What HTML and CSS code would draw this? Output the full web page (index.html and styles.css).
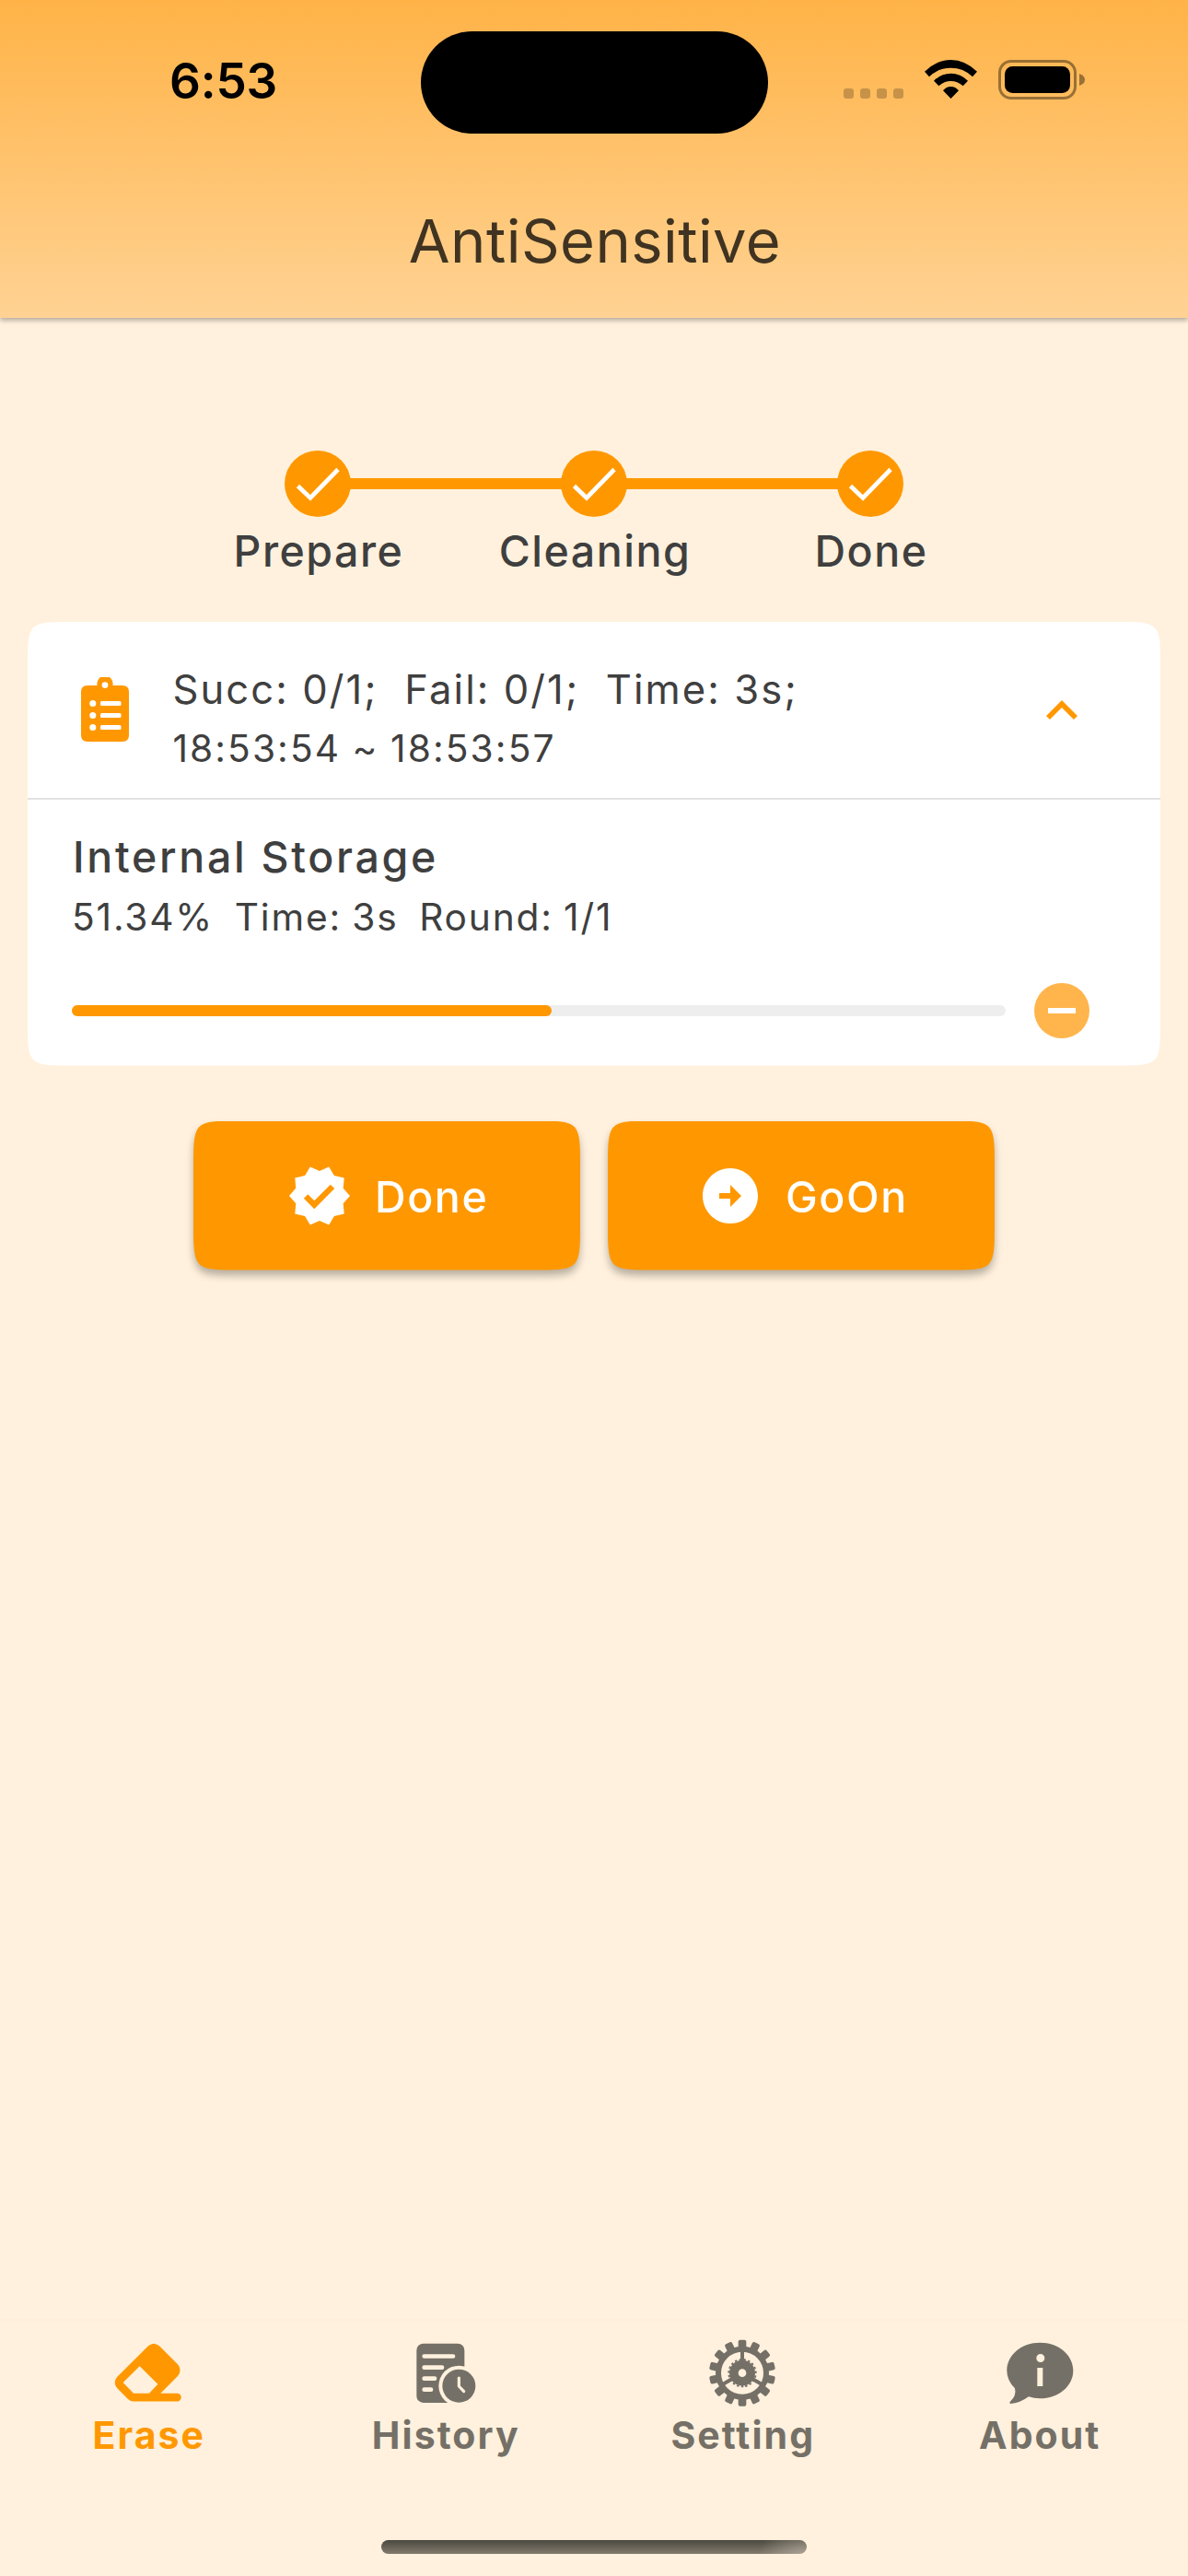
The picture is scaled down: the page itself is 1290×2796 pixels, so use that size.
FILE: index.html
```html
<!DOCTYPE html>
<html lang="en">
<head>
<meta charset="utf-8">
<title>AntiSensitive</title>
<link rel="stylesheet" href="styles.css">
</head>
<body>
<header class="header">
  <div class="status">
    <div class="status-time">6:53</div>
    <div class="island"></div>
    <svg class="status-icons" viewBox="0 0 290 70">
      <g fill="#000" fill-opacity=".22">
        <rect x="16" y="46" width="11" height="11" rx="3"/>
        <rect x="34" y="46" width="11" height="11" rx="3"/>
        <rect x="52" y="46" width="11" height="11" rx="3"/>
        <rect x="70" y="46" width="11" height="11" rx="3"/>
      </g>
      <path d="M104 27.8Q117 15 132.5 15T161 27.8L156 33.2Q146 23.8 132.5 23.8T109 33.2Z"/>
      <path d="M114 37.7Q122 29.8 132.5 29.8T151 37.7L145.700 43.200Q139.500 37.900 132.500 37.900T119.300 43.200Z"/>
      <path d="M124 48.200Q127.500 43.900 132.500 43.900T141 48.200L132.500 57Z"/>
      <rect x="185.500" y="16.500" width="82" height="40" rx="12.500" fill="none" stroke="#000" stroke-opacity=".4" stroke-width="3"/>
      <rect x="191" y="22" width="71" height="29" rx="8.500"/>
      <path d="M272 30Q278 32 278 36.500T272 43Z" fill-opacity=".4"/>
    </svg>
  </div>
  <h1 class="title">AntiSensitive</h1>
</header>

<main class="content">
  <ol class="stepper">
    <li class="step"><span class="step-dot"><svg viewBox="0 0 72 72"><path d="M14.500 38.500L28 51.500 58 20.500"/></svg></span><span class="step-label">Prepare</span></li>
    <li class="step"><span class="step-dot"><svg viewBox="0 0 72 72"><path d="M14.500 38.500L28 51.500 58 20.500"/></svg></span><span class="step-label">Cleaning</span></li>
    <li class="step"><span class="step-dot"><svg viewBox="0 0 72 72"><path d="M14.500 38.500L28 51.500 58 20.500"/></svg></span><span class="step-label">Done</span></li>
  </ol>

  <section class="card">
    <div class="card-head">
      <svg class="clipboard" viewBox="0 0 52 70">
        <path fill="#ff9800" fill-rule="evenodd" d="M7 9H17.600A8.600 8.600 0 1 1 34.400 9H45Q52 9 52 16V63Q52 70 45 70H7Q0 70 0 63V16Q0 9 7 9ZM26 5.200A3.400 3.400 0 1 0 26 12A3.400 3.400 0 1 0 26 5.200Z"/>
        <g fill="#fff">
          <circle cx="12.800" cy="28.500" r="3.500"/><circle cx="12.800" cy="41.500" r="3.500"/><circle cx="12.800" cy="54.500" r="3.500"/>
          <rect x="21" y="26" width="22.500" height="5" rx="1.500"/><rect x="21" y="39" width="22.500" height="5" rx="1.500"/><rect x="21" y="52" width="22.500" height="5" rx="1.500"/>
        </g>
      </svg>
      <div class="summary">
        <p class="summary-counts">Succ: 0/1;&nbsp; Fail: 0/1;&nbsp; Time: 3s;</p>
        <p class="summary-range">18:53:54 ~ 18:53:57</p>
      </div>
      <svg class="chevron" viewBox="6 8 12 7.410"><path fill="#ff9800" d="M12 8l-6 6 1.410 1.410L12 10.830l4.590 4.580L18 14z"/></svg>
    </div>
    <div class="card-body">
      <h2 class="item-name">Internal Storage</h2>
      <p class="item-meta">51.34%&nbsp; Time: 3s&nbsp; Round: 1/1</p>
      <div class="item-progress">
        <div class="track"><div class="fill" style="width:51.34%"></div></div>
        <svg class="minus" viewBox="0 0 60 60"><circle cx="30" cy="30" r="30" fill="#ffb54b"/><rect x="15" y="27" width="30" height="6" fill="#fff"/></svg>
      </div>
    </div>
  </section>

  <div class="actions">
    <button class="button"><span class="button-face">
      <svg class="button-icon" viewBox="0 0 24 24"><path d="M23 12l-2.440-2.790.34-3.690-3.610-.82-1.890-3.200L12 2.960 8.600 1.500 6.710 4.690 3.100 5.500l.34 3.700L1 12l2.440 2.790-.34 3.700 3.610.82L8.600 22.500l3.400-1.470 3.400 1.460 1.890-3.190 3.610-.82-.34-3.690L23 12zm-12.910 4.720l-3.800-3.810 1.480-1.480 2.320 2.330 5.850-5.870 1.480 1.480-7.330 7.350z"/></svg>
      <span class="button-label">Done</span></span></button>
    <button class="button"><span class="button-face">
      <svg class="button-icon" viewBox="0 0 24 24"><path d="M22 12c0-5.520-4.480-10-10-10S2 6.480 2 12s4.480 10 10 10 10-4.480 10-10zm-10 1H8v-2h4V8l4 4-4 4v-3z"/></svg>
      <span class="button-label">GoOn</span></span></button>
  </div>
</main>

<nav class="tabs">
  <div class="tab tab-active">
    <svg class="tab-icon" viewBox="34 15 240 240"><path fill-rule="evenodd" d="M154 49Q172 34 190 49L250 109Q266 127 250 147L194 203H248A13.200 13.200 0 0 1 248 229.500H108Q97 230 88 222L53 187Q37 168 53 149ZM126 115L185 173 157 203H106L72 168Z"/></svg>
    <span class="tab-label">Erase</span>
  </div>
  <div class="tab">
    <svg class="tab-icon" viewBox="1001 15 240 240">
      <mask id="clockCut" maskUnits="userSpaceOnUse" x="1001" y="15" width="240" height="240">
        <rect x="1001" y="15" width="240" height="240" fill="#fff"/>
        <circle cx="1164" cy="179" r="66" fill="#000"/>
        <g stroke="#000" stroke-width="14" stroke-linecap="round"><path d="M1051 82.500H1145M1051 119H1109M1051 155H1085M1051 191H1073"/></g>
      </mask>
      <rect x="1026" y="41" width="156" height="193" rx="22" mask="url(#clockCut)"/>
      <circle cx="1164" cy="179" r="54"/>
      <path class="tab-cut" d="M1164 153V180L1180 197" fill="none" stroke-width="9.500" stroke-linecap="round" stroke-linejoin="round"/>
    </svg>
    <span class="tab-label">History</span>
  </div>
  <div class="tab">
    <svg class="tab-icon" viewBox="48 15 240 240">
      <defs><rect id="tooth" x="155" y="29" width="26" height="34" rx="6"/></defs>
      <use href="#tooth"/>
      <use href="#tooth" transform="rotate(25.714 168 137)"/>
      <use href="#tooth" transform="rotate(51.429 168 137)"/>
      <use href="#tooth" transform="rotate(77.143 168 137)"/>
      <use href="#tooth" transform="rotate(102.857 168 137)"/>
      <use href="#tooth" transform="rotate(128.571 168 137)"/>
      <use href="#tooth" transform="rotate(154.286 168 137)"/>
      <use href="#tooth" transform="rotate(180 168 137)"/>
      <use href="#tooth" transform="rotate(205.714 168 137)"/>
      <use href="#tooth" transform="rotate(231.429 168 137)"/>
      <use href="#tooth" transform="rotate(257.143 168 137)"/>
      <use href="#tooth" transform="rotate(282.857 168 137)"/>
      <use href="#tooth" transform="rotate(308.571 168 137)"/>
      <use href="#tooth" transform="rotate(334.286 168 137)"/>
      <g class="tab-line" fill="none">
        <circle cx="168" cy="137" r="78" stroke-width="18"/>
        <circle cx="168" cy="137" r="27.500" stroke-width="29"/>
        <circle cx="168" cy="137" r="44" stroke-width="6" pathLength="38" stroke-dasharray="1" transform="rotate(85.200 168 137)"/>
        <path stroke-width="12" d="M168 102V62M198.300 154.500L233 174.500M137.700 154.500L103 174.500"/>
      </g>
    </svg>
    <span class="tab-label">Setting</span>
  </div>
  <div class="tab">
    <svg class="tab-icon" viewBox="1016 15 240 240"><path fill-rule="evenodd" d="M1137 38C1197 38 1245 78 1245 129S1197 220 1137 220Q1117 220 1100 214Q1070 236 1041 237Q1035 235 1041 229Q1061 210 1055 187Q1029 161 1029 129C1029 78 1077 38 1137 38ZM1138.500 75A13.500 13.500 0 1 0 1138.500 102A13.500 13.500 0 1 0 1138.500 75ZM1128 120V180H1146V120Z"/></svg>
    <span class="tab-label">About</span>
  </div>
  <div class="home-indicator"></div>
</nav>
</body>
</html>
```
FILE: styles.css
```css
* { box-sizing: border-box; margin: 0; padding: 0; }

body {
  width: 1290px;
  height: 2796px;
  display: flex;
  flex-direction: column;
  overflow: hidden;
  background: #fff1dd;
  color: #3f3f3f;
  font-family: Inter, "Liberation Sans", sans-serif;
}

svg { display: block; flex: none; }

.header {
  position: relative;
  height: 345px;
  background: linear-gradient(#ffb347, #ffd293);
  box-shadow: 0 3px 5px rgba(0, 0, 0, .28);
}
.status {
  display: grid;
  grid-template-columns: 456.500px 377px 1fr;
  align-items: start;
  height: 177px;
}
.status-time {
  padding: 58px 0 0 184px;
  font-size: 53px;
  font-weight: 600;
  line-height: 60px;
  letter-spacing: -.2px;
  color: #000;
}
.island {
  height: 111px;
  margin-top: 33.500px;
  border-radius: 56px;
  background: #000;
}
.status-icons {
  width: 290px;
  height: 70px;
  margin: 50px 0 0 66.500px;
}
.title {
  height: 168px;
  padding: 1px 0 0 2px;
  font-size: 65px;
  font-weight: 400;
  line-height: 168px;
  letter-spacing: .45px;
  text-align: center;
  color: #403321;
}

.content { display: flex; flex-direction: column; padding: 144px 30px 0; }

.stepper {
  display: flex;
  justify-content: center;
  list-style: none;
}
.step {
  position: relative;
  width: 300px;
  display: flex;
  flex-direction: column;
  align-items: center;
  gap: 7px;
}
.step + .step::before {
  content: "";
  position: absolute;
  top: 30px;
  left: -150px;
  width: 300px;
  height: 12px;
  background: #ff9800;
}
.step-dot {
  position: relative;
  z-index: 1;
  width: 72px;
  height: 72px;
  border-radius: 50%;
  background: #ff9800;
}
.step-dot path { fill: none; stroke: #fff; stroke-width: 4.700; }
.step-label {
  padding-left: 2px;
  font-size: 46.500px;
  font-weight: 450;
  line-height: 60px;
  letter-spacing: 1.500px;
}

.card {
  height: 481.500px;
  margin-top: 47px;
  background: #fff;
  clip-path: path("M0 50C0 0 0 0 50 0H1180C1230 0 1230 0 1230 50V431.500C1230 481.500 1230 481.500 1180 481.500H50C0 481.500 0 481.500 0 431.500Z");
}
.card-head {
  display: flex;
  align-items: center;
  height: 193px;
  padding: 0 90px 0 58px;
  border-bottom: 2px solid #e2e2e2;
}
.clipboard { width: 52px; height: 70px; margin-bottom: 1px; }
.summary { flex: 1; padding: 20px 0 0 47.400px; }
.summary p { line-height: 64px; }
.summary-counts { font-size: 43.600px; letter-spacing: 2.070px; }
.summary-range, .item-meta { font-size: 40.700px; }
.summary-range { letter-spacing: 2.080px; word-spacing: -1px; }
.chevron { width: 34px; height: 21px; }

.card-body { padding: 32px 77px 0 48px; }
.item-name {
  padding-left: 1px;
  font-size: 46.500px;
  font-weight: 500;
  line-height: 60px;
  letter-spacing: 2.670px;
}
.item-meta {
  margin-top: 6px;
  line-height: 60px;
  letter-spacing: 1.800px;
  word-spacing: -1.900px;
}
.item-progress {
  display: flex;
  align-items: center;
  justify-content: space-between;
  margin-top: 40.500px;
}
.track {
  width: 1014px;
  height: 12px;
  border-radius: 6px;
  background: #eee;
}
.fill { height: 12px; border-radius: 6px; background: #ff9800; }
.minus { width: 60px; height: 60px; }

.actions {
  display: flex;
  justify-content: center;
  gap: 30px;
  margin-top: 60px;
}
.button {
  border: 0;
  background: none;
  font: inherit;
  filter: drop-shadow(0 6px 4px rgba(0, 0, 0, .28));
}
.button-face {
  display: flex;
  align-items: center;
  gap: 24px;
  width: 420px;
  height: 162px;
  padding-left: 101px;
  background: #ff9800;
  clip-path: path("M0 52C0 0 0 0 52 0H368C420 0 420 0 420 52V110C420 162 420 162 368 162H52C0 162 0 162 0 110Z");
  color: #fff;
  font-size: 46.500px;
  font-weight: 450;
  line-height: 60px;
  letter-spacing: 1.600px;
}
.button-label { padding-top: 2px; }
.button + .button .button-face { padding-left: 97px; }
.button-icon { width: 72px; height: 72px; fill: #fff; }

.tabs {
  position: relative;
  display: flex;
  height: 276px;
  margin-top: auto;
  padding-top: 15px;
  background: #fff1dd;
  box-shadow: 0 -3px 2px rgba(0, 0, 0, .012);
}
.tab {
  flex: 1;
  display: flex;
  flex-direction: column;
  align-items: center;
  gap: 3px;
  color: #757067;
}
.tab-active { color: #ff9800; }
.tab-icon { width: 80px; height: 80px; fill: currentColor; }
.tab-line { stroke: currentColor; }
.tab-cut { stroke: #fff1dd; }
.tab-label {
  padding-left: 1px;
  font-size: 41px;
  font-weight: 650;
  line-height: 50px;
  letter-spacing: 2.050px;
}
.home-indicator {
  position: absolute;
  left: 414px;
  bottom: 24px;
  width: 462px;
  height: 15px;
  border-radius: 8px;
  background: radial-gradient(circle at 100% 150%, rgba(255, 241, 223, .4), rgba(255, 241, 223, 0) 52px), linear-gradient(#4b493f, #827a6e);
}
```
